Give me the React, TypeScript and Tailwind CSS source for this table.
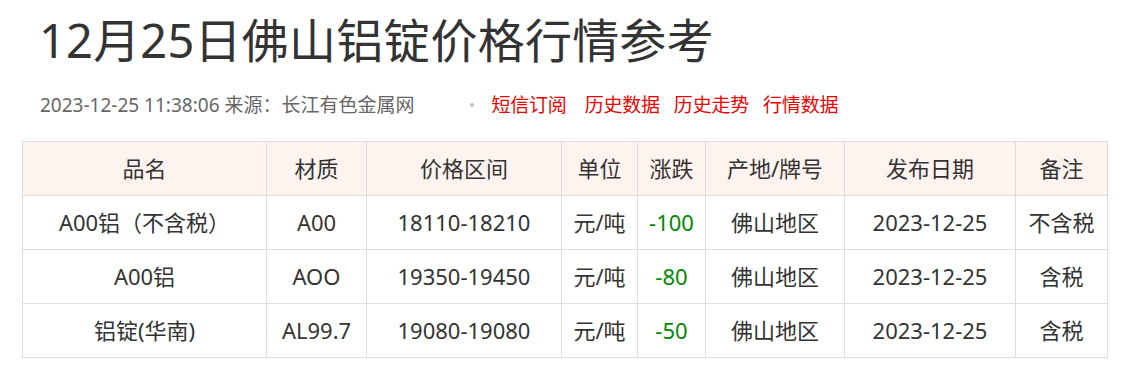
const rows = [
  { name: 'A00铝（不含税）', mat: 'A00', price: '18110-18210', unit: '元/吨', diff: '-100', place: '佛山地区', date: '2023-12-25', note: '不含税' },
  { name: 'A00铝', mat: 'AOO', price: '19350-19450', unit: '元/吨', diff: '-80', place: '佛山地区', date: '2023-12-25', note: '含税' },
  { name: '铝锭(华南)', mat: 'AL99.7', price: '19080-19080', unit: '元/吨', diff: '-50', place: '佛山地区', date: '2023-12-25', note: '含税' },
]

const heads = ['品名', '材质', '价格区间', '单位', '涨跌', '产地/牌号', '发布日期', '备注']
const widths = ['w-[244px]', 'w-[100px]', 'w-[195px]', 'w-[76px]', 'w-[68px]', 'w-[139px]', 'w-[171px]', 'w-[92px]']

const links = ['短信订阅', '历史数据', '历史走势', '行情数据']

export default function App() {
  return (
    <div className="bg-white w-[1127px] h-[371px] font-['Noto_Sans','Noto_Sans_CJK_SC',sans-serif] text-[#333]">
      <h1 className="pl-[39px] pt-[10px] text-[47px] leading-[60px] tracking-[0.2px] text-[#333]">12月25日佛山铝锭价格行情参考</h1>
      <div className="flex items-center pl-[40px] mt-[21px] h-[28px] text-[19px] leading-[28px]">
        <span className="text-[#666]">2023-12-25 11:38:06 来源：长江有色金属网</span>
        <span className="ml-[56px] w-[4px] h-[4px] bg-[#bbb] rounded-full" />
        <div className="flex ml-[17px] gap-[14px] text-[#e00] tracking-[-0.2px]">
          {links.map((l, i) => <span key={l} className={i === 0 ? 'mr-[4px]' : ''}>{l}</span>)}
        </div>
      </div>
      <table className="ml-[22px] mt-[22px] border-collapse table-fixed text-[22px]">
        <thead>
          <tr className="bg-[#fff3ef] h-[54px]">
            {heads.map((h, i) => (
              <th key={h} className={`${widths[i]} border border-[#ddd] font-normal text-center`}>{h}</th>
            ))}
          </tr>
        </thead>
        <tbody>
          {rows.map(r => (
            <tr key={r.name} className="h-[54px]">
              <td className="border border-[#ddd] text-center">{r.name}</td>
              <td className="border border-[#ddd] text-center">{r.mat}</td>
              <td className="border border-[#ddd] text-center">{r.price}</td>
              <td className="border border-[#ddd] text-center">{r.unit}</td>
              <td className="border border-[#ddd] text-center text-[#080]">{r.diff}</td>
              <td className="border border-[#ddd] text-center">{r.place}</td>
              <td className="border border-[#ddd] text-center">{r.date}</td>
              <td className="border border-[#ddd] text-center">{r.note}</td>
            </tr>
          ))}
        </tbody>
      </table>
    </div>
  )
}
